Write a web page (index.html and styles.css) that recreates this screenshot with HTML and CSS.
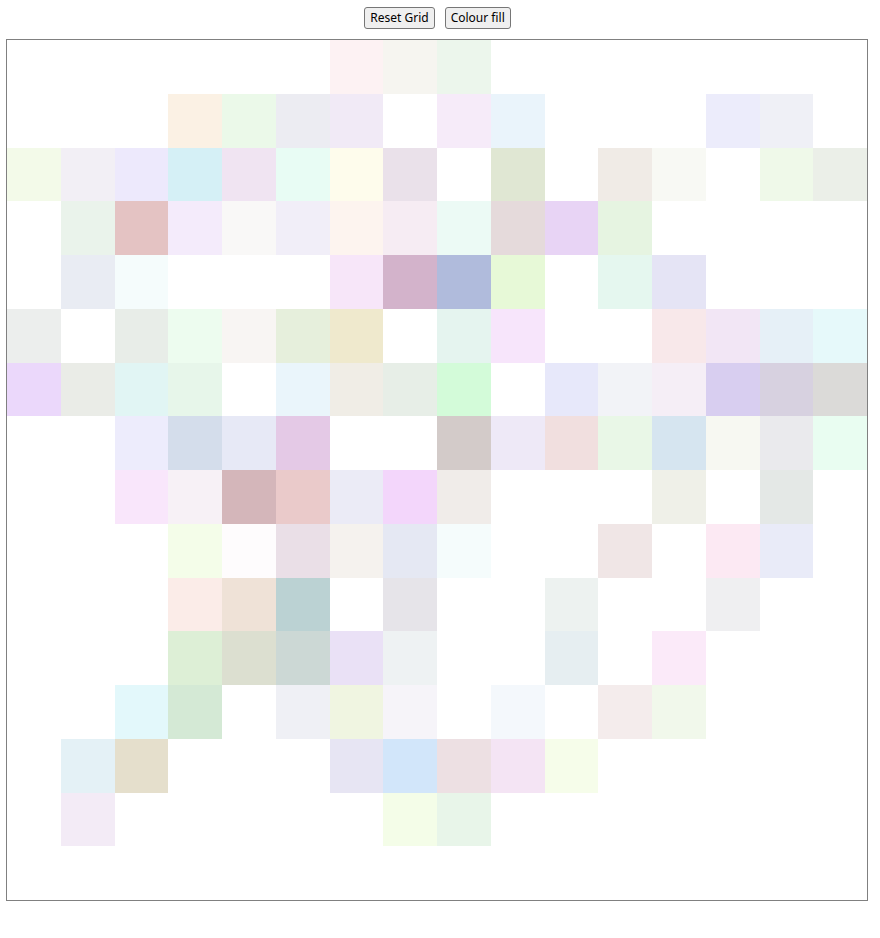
FILE: index.html
```html
<!DOCTYPE html>
<html lang="en">
<head>
    <meta charset="UTF-8">
    <title>Pixel Grid</title>
    <link rel="stylesheet" href="styles.css">
</head>
<body>
    <div class="controls">
        <button id="reset">Reset Grid</button>
        <button id="fill">Colour fill</button>
    </div>

    <div class="grid" id="grid"></div>

    <script src="script.js"></script>
</body>
</html>
```

FILE: styles.css
```css
*{
    box-sizing: border-box;
}
body{
    margin: 0;
    background: #fff;
}
/*按钮区域*/
.controls{
    display: flex;
    justify-content: center;
    gap: 10px;
    padding: 7px 5px 0 0;
}
.controls button{
    height: 22px;
    padding: 0 5px;
    font-family: "Noto Sans", "Open Sans", sans-serif;
    font-size: 12px;
    line-height: 18px;
    color: #000;
    background-color: #efefef;
    border: 1px solid #767676;
    border-radius: 3px;
    outline: none;
}
.controls button:hover{
    background-color: #e5e5e5;
}
/*网格*/
.grid{
    display: grid;
    grid-template-columns: repeat(16, 1fr);
    grid-template-rows: repeat(16, 1fr);
    width: 862px;
    height: 862px;
    margin: 10px 0 0 6px;
    border: 1px solid #808080;
}
.grid .cell{
    background-color: #fff;
}
```

FILE: script.js
```js
var grid = document.getElementById('grid');
var resetBtn = document.getElementById('reset');
var fillBtn = document.getElementById('fill');

/*每个格子的颜色，空字符串为白色*/
var colours = [
    ["","","","","","","#fdf2f3","#f6f5f0","#ecf6ec","","","","","","",""],
    ["","","","#fbf1e4","#ebf9e9","#ececf2","#f1eaf6","","#f6ebf9","#eaf4fb","","","","#ececfb","#eff0f6",""],
    ["#f3fae9","#f2eff5","#ede9fc","#d5f0f6","#f0e4f2","#e8fcf4","#fefcec","#eae1ea","","#e0e7d3","","#f0ebe6","#f8f9f4","","#eff9e9","#ebefe8"],
    ["","#eaf3eb","#e4c3c3","#f4ebfb","#f9f8f7","#f1eef8","#fdf4ef","#f6ecf3","#ecfaf5","#e5dadb","#e8d4f5","#e6f4e1","","","",""],
    ["","#e9ecf3","#f5fcfc","","","","#f7e6f9","#d3b3cb","#b0bbdc","#e7f9d7","","#e5f7ef","#e5e4f5","","",""],
    ["#eceeed","","#e8ede8","#edfcef","#f8f5f3","#e6efdc","#efe9cd","","#e5f4ef","#f7e5fb","","","#f8e8ea","#f2e6f5","#e6f0f7","#e6f9fa"],
    ["#ebd8fb","#eaece7","#e1f5f4","#e7f6ea","","#eaf5fb","#f0ede6","#e7eee7","#d3fbd9","","#e7e8fa","#f2f3f7","#f5eef6","#d8cef0","#d7d1e0","#dbdad8"],
    ["","","#edecfc","#d4ddeb","#e7e9f6","#e4c9e6","","","#d3cbc9","#eee9f7","#f1dfdf","#e9f7e7","#d6e5f0","#f7f8f2","#eaeaed","#e9fdf1"],
    ["","","#f9e6fb","#f7f1f6","#d4b6ba","#eacaca","#ebebf6","#f3d6fb","#f0ece9","","","","#eff0e8","","#e4e8e6",""],
    ["","","","#f4fde9","#fefcfd","#eadfe7","#f5f2ee","#e5e8f3","#f5fcfc","","","#f0e6e6","","#fce9f3","#e9ebf8",""],
    ["","","","#fbece8","#efe2d7","#bbd2d3","","#e6e4e9","","","#edf2f0","","","#efeff1","",""],
    ["","","","#ddefd6","#dcdfd0","#ccd8d5","#eae1f6","#eef2f3","","","#e6eef1","","#fbeaf9","","",""],
    ["","","#e3f8fb","#d4e9d5","","#eff0f5","#f0f5e1","#f6f4f9","","#f4f8fc","","#f4ecec","#f1f8eb","","",""],
    ["","#e4f1f6","#e5dfcc","","","","#e7e5f3","#d2e6fa","#ede0e3","#f4e4f4","#f6fdea","","","","",""],
    ["","#f3ebf6","","","","","","#f4fde8","#e8f5e9","","","","","","",""],
    ["","","","","","","","","","","","","","","",""]
];

/*生成格子*/
var cells = [];
for (var r = 0; r < 16; r++) {
    for (var c = 0; c < 16; c++) {
        var cell = document.createElement('div');
        cell.className = 'cell';
        if (colours[r][c]) {
            cell.style.backgroundColor = colours[r][c];
        }
        grid.appendChild(cell);
        cells.push(cell);
    }
}

/*清空*/
resetBtn.addEventListener('click', function(){
    cells.forEach(function(cell){
        cell.style.backgroundColor = '';
    });
}, false);

/*随机浅色填充*/
fillBtn.addEventListener('click', function(){
    cells.forEach(function(cell){
        var rgb = [0, 0, 0].map(function(){
            return 176 + Math.floor(Math.random() * 80);
        });
        cell.style.backgroundColor = 'rgb(' + rgb.join(',') + ')';
    });
}, false);
```
